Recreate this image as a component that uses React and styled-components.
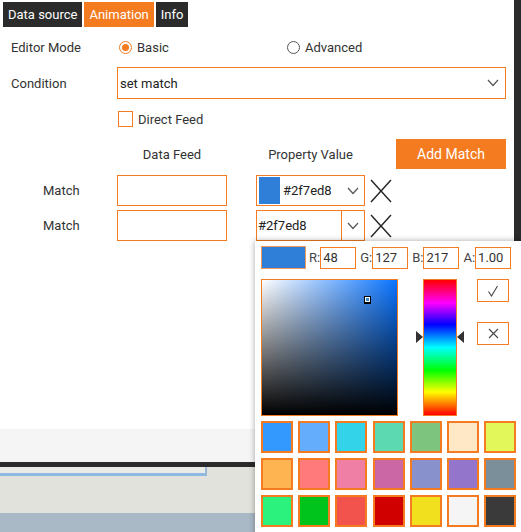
import styled, { createGlobalStyle } from "styled-components";

const ORANGE = "#f47b20";
const DARK = "#2b2b2b";

const GlobalStyle = createGlobalStyle`
  html, body {
    margin: 0;
    padding: 0;
  }
  body {
    font-family: Roboto, "Liberation Sans", sans-serif;
    font-size: 13px;
    color: #333;
    background: #e2e2dc;
  }
`;

const Screen = styled.div`
  position: relative;
  width: 521px;
  height: 532px;
  overflow: hidden;
  display: flex;
  flex-direction: column;
  background: #e2e2dc;
`;

const Window = styled.div`
  display: flex;
  flex-direction: column;
  height: 462px;
  background: #fff;
  border-right: 7px solid ${DARK};
  border-bottom: 5px solid ${DARK};
`;

const Panel = styled.div`
  flex: 1;
  display: flex;
  flex-direction: column;
`;

const Footer = styled.div`
  height: 33px;
  background: #f5f5f5;
`;

const Tabs = styled.div`
  display: flex;
  gap: 2px;
  padding: 2px 0 0 3px;
`;

const Tab = styled.div`
  height: 25px;
  line-height: 25px;
  padding: 0 5px;
  color: #fff;
  font-size: 13px;
  background: ${(p) => (p.$active ? ORANGE : DARK)};
`;

const Form = styled.div`
  display: flex;
  flex-direction: column;
  padding-left: 11px;
`;

const Row = styled.div`
  display: flex;
  align-items: center;
  height: ${(p) => p.$h || 30}px;
  margin-top: ${(p) => p.$mt || 0}px;
`;

const Label = styled.div`
  width: 106px;
  flex-shrink: 0;
  box-sizing: border-box;
  padding-left: ${(p) => p.$indent || 0}px;
  color: #333;
`;

const RadioOption = styled.label`
  display: flex;
  align-items: center;
  gap: 5px;
  width: ${(p) => p.$w || "auto"};
  margin-left: 2px;
`;

const RadioDot = styled.span`
  width: 13px;
  height: 13px;
  box-sizing: border-box;
  border-radius: 50%;
  border: 1px solid ${(p) => (p.$on ? ORANGE : "#555")};
  display: flex;
  align-items: center;
  justify-content: center;
  &::after {
    content: "";
    width: 7px;
    height: 7px;
    border-radius: 50%;
    background: ${(p) => (p.$on ? ORANGE : "transparent")};
  }
`;

const Select = styled.div`
  width: 389px;
  height: 32px;
  box-sizing: border-box;
  border: 1px solid ${ORANGE};
  display: flex;
  align-items: center;
  justify-content: space-between;
  padding: 0 6px 0 2px;
  color: #222;
`;

const Check = styled.span`
  width: 15px;
  height: 16px;
  box-sizing: border-box;
  border: 1px solid ${ORANGE};
  margin-left: 1px;
  margin-right: 5px;
`;

const ColHead = styled.div`
  width: ${(p) => p.$w}px;
  margin-right: ${(p) => p.$mr || 0}px;
  text-align: center;
  flex-shrink: 0;
`;

const AddButton = styled.button`
  width: 110px;
  height: 30px;
  border: none;
  background: ${ORANGE};
  color: #fff;
  font-family: inherit;
  font-size: 14px;
  padding: 0;
`;

const TextBox = styled.div`
  width: 110px;
  height: 31px;
  box-sizing: border-box;
  border: 1px solid ${ORANGE};
  margin-right: 29px;
  flex-shrink: 0;
`;

const ColorField = styled.div`
  width: 109px;
  height: 31px;
  box-sizing: border-box;
  border: 1px solid ${ORANGE};
  display: flex;
  align-items: center;
  flex-shrink: 0;
  color: #222;
`;

const FieldSwatch = styled.span`
  width: 21px;
  height: 27px;
  margin: 0 3px 0 2px;
  background: #2f7ed8;
`;

const FieldText = styled.span`
  flex: 1;
  padding-left: ${(p) => p.$pad || 0}px;
`;

const ChevronBox = styled.span`
  width: ${(p) => p.$w}px;
  height: 100%;
  box-sizing: border-box;
  display: flex;
  align-items: center;
  justify-content: center;
  border-left: ${(p) => (p.$split ? `1px solid ${ORANGE}` : "none")};
`;

const Remove = styled.span`
  margin-left: 5px;
  display: flex;
`;

const Desktop = styled.div`
  flex: 1;
  display: flex;
  flex-direction: column;
`;

const BgWindow = styled.div`
  width: 205px;
  height: 6px;
  background: #ebebe7;
  border-right: 2px solid #9ab7d6;
  border-bottom: 3px solid #8fb9e3;
`;

const BgBar = styled.div`
  margin-top: auto;
  height: 19px;
  background: #a9b9c6;
`;

/* colour picker popup */
const Popup = styled.div`
  position: absolute;
  left: 255px;
  top: 241px;
  width: 280px;
  height: 300px;
  box-sizing: border-box;
  padding: 5px 0 0 6px;
  background: #fff;
  box-shadow: 0 0 6px rgba(0, 0, 0, 0.35);
`;

const ChannelRow = styled.div`
  display: flex;
  align-items: center;
  height: 23px;
`;

const Preview = styled.div`
  width: 45px;
  height: 23px;
  box-sizing: border-box;
  border: 1px solid #f59a55;
  background: #2f7ed8;
  margin-right: 3px;
`;

const ChannelLabel = styled.span`
  margin-left: ${(p) => p.$ml || 0}px;
  color: #444;
  font-size: 13px;
`;

const ChannelInput = styled.div`
  width: 36px;
  height: 22px;
  box-sizing: border-box;
  border: 1px solid ${ORANGE};
  padding-left: 2px;
  line-height: 20px;
  font-size: 13px;
  color: #333;
`;

const PickerBody = styled.div`
  display: flex;
  margin-top: 10px;
`;

const SatBox = styled.div`
  position: relative;
  width: 137px;
  height: 137px;
  box-sizing: border-box;
  border: 1px solid ${ORANGE};
  background: linear-gradient(to top, #000, rgba(0, 0, 0, 0)),
    linear-gradient(to right, #fff, rgba(255, 255, 255, 0)), #0a74ff;
`;

const Marker = styled.span`
  position: absolute;
  left: 102px;
  top: 16px;
  width: 7px;
  height: 8px;
  box-sizing: border-box;
  background: #fff;
  border: 1px solid #000;
  border-bottom-width: 2px;
  &::after {
    content: "";
    position: absolute;
    left: 1px;
    top: 1px;
    width: 3px;
    height: 3px;
    background: #3a8ad8;
  }
`;

const HueBar = styled.div`
  position: relative;
  width: 34px;
  height: 137px;
  box-sizing: border-box;
  margin-left: 25px;
  border: 1px solid ${ORANGE};
  background: linear-gradient(
    to bottom,
    #f00 0%,
    #f0f 17%,
    #00f 33%,
    #0ff 50%,
    #0f0 67%,
    #ff0 83%,
    #f00 100%
  );
`;

const Arrow = styled.span`
  position: absolute;
  top: 51px;
  width: 0;
  height: 0;
  border-top: 6px solid transparent;
  border-bottom: 6px solid transparent;
  ${(p) =>
    p.$side === "left"
      ? `left: -8px; border-left: 7px solid #333;`
      : `right: -8px; border-right: 7px solid #333;`}
`;

const ActionCol = styled.div`
  display: flex;
  flex-direction: column;
  gap: 20px;
  margin-left: 20px;
`;

const ActionButton = styled.div`
  width: 32px;
  height: 23px;
  box-sizing: border-box;
  border: 1px solid ${ORANGE};
  display: flex;
  align-items: center;
  justify-content: center;
  color: #444;
`;

const SwatchGrid = styled.div`
  display: grid;
  grid-template-columns: repeat(7, 32px);
  grid-auto-rows: 32px;
  gap: 5px 5.2px;
  margin-top: 5px;
`;

const Swatch = styled.span`
  box-sizing: border-box;
  border: 2px solid ${ORANGE};
  background: ${(p) => p.$c};
`;

const swatches = [
  "#3399ff", "#63adfc", "#33d3ea", "#5cd9b0", "#7dc47f", "#ffe8c6", "#e1f75a",
  "#ffb452", "#ff7b7b", "#f07fa6", "#cc67a6", "#8891cc", "#9475cc", "#7a8f99",
  "#2af27d", "#00c41c", "#f2544d", "#d00000", "#f0e01e", "#f5f5f5", "#3a3a3a",
];

const Chevron = () => (
  <svg width="12" height="8" viewBox="0 0 12 8">
    <polyline points="1,1 6,6.5 11,1" fill="none" stroke="#555" strokeWidth="1.2" />
  </svg>
);

const Cross = ({ size = 22, h = 24, color = "#222", w = 1.4 }) => (
  <svg width={size} height={h} viewBox={`0 0 ${size} ${h}`}>
    <line x1="1" y1="1" x2={size - 1} y2={h - 1} stroke={color} strokeWidth={w} />
    <line x1={size - 1} y1="1" x2="1" y2={h - 1} stroke={color} strokeWidth={w} />
  </svg>
);

const ColorPicker = () => (
  <Popup>
    <ChannelRow>
      <Preview />
      <ChannelLabel>R:</ChannelLabel>
      <ChannelInput>48</ChannelInput>
      <ChannelLabel $ml={4}>G:</ChannelLabel>
      <ChannelInput>127</ChannelInput>
      <ChannelLabel $ml={4}>B:</ChannelLabel>
      <ChannelInput>217</ChannelInput>
      <ChannelLabel $ml={4}>A:</ChannelLabel>
      <ChannelInput>1.00</ChannelInput>
    </ChannelRow>
    <PickerBody>
      <SatBox>
        <Marker />
      </SatBox>
      <HueBar>
        <Arrow $side="left" />
        <Arrow $side="right" />
      </HueBar>
      <ActionCol>
        <ActionButton>
          <svg width="12" height="12" viewBox="0 0 12 12">
            <polyline points="1.5,6.5 4.5,11 10.5,1" fill="none" stroke="#444" strokeWidth="1.1" />
          </svg>
        </ActionButton>
        <ActionButton>
          <Cross size={11} h={11} color="#444" w={1.1} />
        </ActionButton>
      </ActionCol>
    </PickerBody>
    <SwatchGrid>
      {swatches.map((c, i) => (
        <Swatch key={i} $c={c} />
      ))}
    </SwatchGrid>
  </Popup>
);

const App = () => {
  return (
    <Screen>
      <GlobalStyle />
      <Window>
        <Panel>
          <Tabs>
            <Tab>Data source</Tab>
            <Tab $active>Animation</Tab>
            <Tab>Info</Tab>
          </Tabs>
          <Form>
            <Row $mt={6} $h={28}>
              <Label>Editor Mode</Label>
              <RadioOption $w="166px">
                <RadioDot $on />
                Basic
              </RadioOption>
              <RadioOption>
                <RadioDot />
                Advanced
              </RadioOption>
            </Row>
            <Row $mt={6} $h={32}>
              <Label>Condition</Label>
              <Select>
                set match
                <Chevron />
              </Select>
            </Row>
            <Row $mt={5} $h={30}>
              <Label />
              <Check />
              Direct Feed
            </Row>
            <Row $mt={5} $h={30}>
              <Label />
              <ColHead $w={110} $mr={29}>Data Feed</ColHead>
              <ColHead $w={109} $mr={31}>Property Value</ColHead>
              <AddButton>Add Match</AddButton>
            </Row>
            <Row $mt={6} $h={31}>
              <Label $indent={32}>Match</Label>
              <TextBox />
              <ColorField>
                <FieldSwatch />
                <FieldText>#2f7ed8</FieldText>
                <ChevronBox $w={22}>
                  <Chevron />
                </ChevronBox>
              </ColorField>
              <Remove>
                <Cross />
              </Remove>
            </Row>
            <Row $mt={4} $h={31}>
              <Label $indent={32}>Match</Label>
              <TextBox />
              <ColorField>
                <FieldText $pad={1}>#2f7ed8</FieldText>
                <ChevronBox $w={23} $split>
                  <Chevron />
                </ChevronBox>
              </ColorField>
              <Remove>
                <Cross />
              </Remove>
            </Row>
          </Form>
        </Panel>
        <Footer />
      </Window>
      <Desktop>
        <BgWindow />
        <BgBar />
      </Desktop>
      <ColorPicker />
    </Screen>
  );
};

export default App;
